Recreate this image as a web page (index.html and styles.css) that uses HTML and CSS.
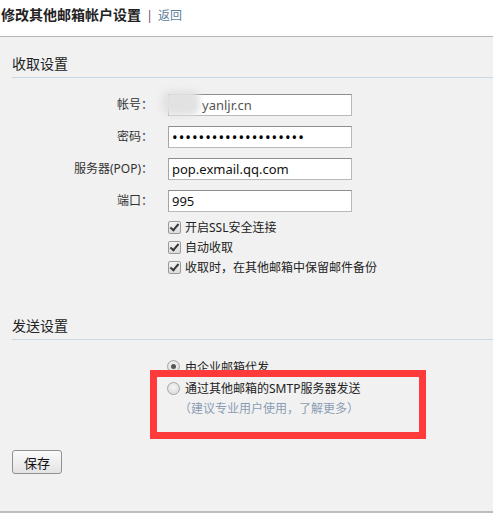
FILE: index.html
```html
<!DOCTYPE html>
<html lang="zh-CN">
<head>
  <meta charset="UTF-8">
  <title>修改其他邮箱帐户设置</title>
  <link rel="stylesheet" href="styles.css">
</head>
<body>

<div class="wrap">
  <div class="top">
    <span class="top-title">修改其他邮箱帐户设置</span>
    <span class="sep">|</span>
    <a class="back" href="#">返回</a>
  </div>

  <div class="panel">
    <h3 class="sec-title">收取设置</h3>

    <div class="form">
      <label class="lbl">帐号：</label>
      <div class="field">
        <input class="txt txt-mail" type="text" value="yanljr.cn">
        <span class="blur"></span>
      </div>

      <label class="lbl">密码：</label>
      <div class="field">
        <input class="txt txt-pwd" type="password" value="xxxxxxxxxxxxxxxxxxxx">
      </div>

      <label class="lbl">服务器(POP)：</label>
      <div class="field">
        <input class="txt" type="text" value="pop.exmail.qq.com">
      </div>

      <label class="lbl">端口：</label>
      <div class="field">
        <input class="txt" type="text" value="995">
      </div>
    </div>

    <div class="checks">
      <div class="chk-row"><span class="chk"></span>开启SSL安全连接</div>
      <div class="chk-row"><span class="chk"></span>自动收取</div>
      <div class="chk-row"><span class="chk"></span>收取时，在其他邮箱中保留邮件备份</div>
    </div>

    <h3 class="sec-title sec-send">发送设置</h3>

    <div class="radios">
      <div class="rad-row"><span class="rad rad-on"></span>由企业邮箱代发</div>
      <div class="rad-row"><span class="rad"></span>通过其他邮箱的SMTP服务器发送</div>
      <div class="hint">（建议专业用户使用，了解更多）</div>
      <div class="mark"></div>
    </div>

    <button class="btn" type="button">保存</button>
  </div>
</div>

</body>
</html>
```

FILE: styles.css
```css
body {
  margin: 0;
  padding: 0;
  background: #fff;
  color: #222;
  font-family: "Noto Sans", "Noto Sans CJK TC", sans-serif;
  font-size: 12px;
}
.wrap {
  width: 493px;
}
.top {
  height: 36px;
  line-height: 30px;
  border-bottom: 1px solid #b8b8b8;
  padding-left: 1px;
  white-space: nowrap;
}
.top-title {
  font-size: 14px;
  font-weight: bold;
  color: #222;
}
.sep {
  color: #6b4a6b;
  margin: 0 2px 0 2px;
}
.back {
  color: #5d7e9b;
  text-decoration: none;
}
.panel {
  position: relative;
  background: #f1f1f1;
  height: 476px;
  border-bottom: 2px solid #bdbdbd;
  padding-top: 17px;
  box-sizing: border-box;
}
.sec-title {
  margin: 0 0 0 12px;
  font-size: 14px;
  font-weight: normal;
  line-height: 20px;
  padding-bottom: 3px;
  border-bottom: 1px solid #c9d8e6;
  color: #222;
}
.sec-send {
  margin-top: 39px;
}

/* receive form */
.form {
  display: grid;
  grid-template-columns: 153px 184px;
  column-gap: 15px;
  row-gap: 10px;
  margin-top: 16px;
}
.lbl {
  text-align: right;
  line-height: 22px;
  color: #333;
}
.field {
  position: relative;
}
.txt {
  display: block;
  width: 184px;
  height: 22px;
  box-sizing: border-box;
  border: 1px solid #b9b9b9;
  border-top-color: #8d8d8d;
  border-left-color: #a4a4a4;
  background: #fff;
  padding: 0 3px;
  margin: 0;
  font-family: "Noto Sans", sans-serif;
  font-size: 13px;
  color: #111;
  outline: none;
}
.txt-mail {
  padding-left: 33px;
  color: #555;
}
.txt-pwd {
  font-size: 15px;
  letter-spacing: 1px;
  color: #000;
}
.blur {
  position: absolute;
  left: -6px;
  top: -4px;
  width: 38px;
  height: 26px;
  background: #e2e2e2;
  border-radius: 10px;
  filter: blur(3px);
}

/* checkboxes */
.checks {
  margin: 5px 0 0 168px;
}
.chk-row {
  display: flex;
  align-items: center;
  height: 20px;
  color: #222;
}
.chk {
  width: 11px;
  height: 11px;
  border: 1px solid #9a9a9a;
  border-radius: 2px;
  background: linear-gradient(#f4f4f4, #dcdcdc);
  margin-right: 4px;
  position: relative;
}
.chk::after {
  content: "";
  position: absolute;
  left: 3px;
  top: 0px;
  width: 3px;
  height: 7px;
  border: solid #3a3a3a;
  border-width: 0 2px 2px 0;
  transform: rotate(40deg);
}

/* send */
.radios {
  margin: 16px 0 0 167px;
}
.rad-row {
  display: flex;
  align-items: center;
  height: 22px;
  color: #222;
}
.rad-row:first-child {
  height: 21px;
}
.rad {
  width: 11px;
  height: 11px;
  border: 1px solid #a5a5a5;
  border-radius: 50%;
  background: radial-gradient(circle at 50% 40%, #f6f6f6, #d6d6d6);
  margin-right: 5px;
  position: relative;
}
.rad-on::after {
  content: "";
  position: absolute;
  left: 3px;
  top: 3px;
  width: 5px;
  height: 5px;
  border-radius: 50%;
  background: #555;
}
.hint {
  height: 20px;
  line-height: 20px;
  color: #8a9db3;
  margin-left: 12px;
}
.mark {
  position: absolute;
  left: 150px;
  top: 333px;
  width: 262px;
  height: 55px;
  border: 7px solid #fe3a3a;
}
.btn {
  display: block;
  margin: 31px 0 0 12px;
  width: 50px;
  height: 24px;
  border: 1px solid #909090;
  border-radius: 3px;
  background: linear-gradient(#fbfbfb, #e3e3e3);
  font-family: "Noto Sans CJK TC", sans-serif;
  font-size: 13px;
  color: #111;
  padding: 0;
}
```
